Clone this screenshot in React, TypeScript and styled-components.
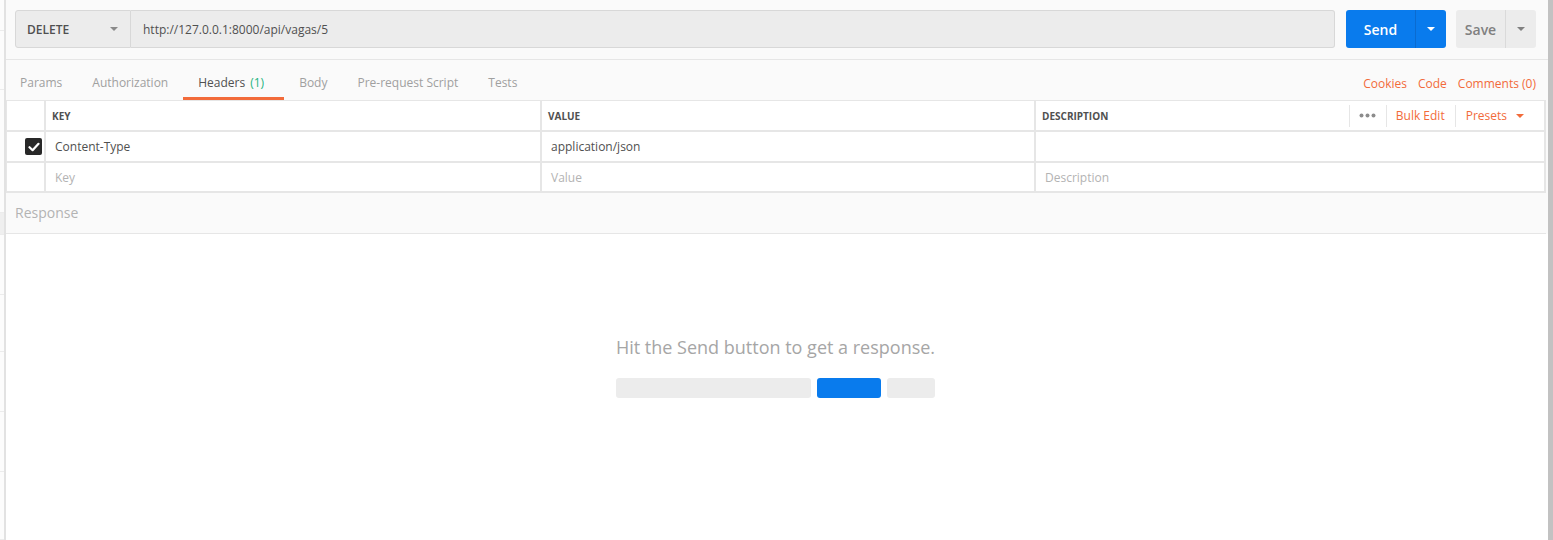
import styled, { createGlobalStyle } from "styled-components"

const Global = createGlobalStyle`
    html, body {
        margin: 0;
        padding: 0;
        background: #ffffff;
        font-family: "Open Sans", "Liberation Sans", sans-serif;
    }
    * {
        box-sizing: border-box;
    }
`

const Colors = {
    Orange: "#f26b3a",
    Blue: "#097bed",
    Text: "#505050",
    Muted: "#808080",
    Placeholder: "#b3b3b3",
    Line: "#e6e6e6",
    Field: "#ececec",
    Panel: "#fafafa",
}

const Caret = ({ color, size = 8 }: { color: string; size?: number }) => (
    <svg width={size} height={size / 2} viewBox="0 0 8 4">
        <path d="M0 0 L8 0 L4 4 Z" fill={color} />
    </svg>
)

const CheckIcon = () => (
    <svg width="12" height="10" viewBox="0 0 12 10">
        <path
            d="M1.5 5.2 L4.6 8.2 L10.5 1.8"
            stroke="#ffffff"
            strokeWidth="2.2"
            fill="none"
            strokeLinecap="round"
            strokeLinejoin="round"
        />
    </svg>
)

const DotsIcon = () => (
    <svg width="17" height="5" viewBox="0 0 17 5">
        <circle cx="2.5" cy="2.5" r="2" fill="#8c8c8c" />
        <circle cx="8.5" cy="2.5" r="2" fill="#8c8c8c" />
        <circle cx="14.5" cy="2.5" r="2" fill="#8c8c8c" />
    </svg>
)

const tabs = [
    { label: "Params" },
    { label: "Authorization" },
    { label: "Headers", count: "(1)", active: true },
    { label: "Body" },
    { label: "Pre-request Script" },
    { label: "Tests" },
]

const sideItems = [31, 59, 123, 22, 60, 57, 60, 60, 68]

function App() {
    return (
        <>
            <Global />
            <Page>
                <Sidebar>
                    {sideItems.map((h, i) => (
                        <SideItem key={i} height={h} selected={i === 3} />
                    ))}
                </Sidebar>
                <Main>
                    <RequestBar>
                        <MethodSelect>
                            <span>DELETE</span>
                            <Caret color="#8a8a8a" />
                        </MethodSelect>
                        <UrlInput>http://127.0.0.1:8000/api/vagas/5</UrlInput>
                        <SplitButton primary>
                            <ButtonLabel>Send</ButtonLabel>
                            <ButtonCaret primary>
                                <Caret color="#ffffff" />
                            </ButtonCaret>
                        </SplitButton>
                        <SplitButton>
                            <ButtonLabel>Save</ButtonLabel>
                            <ButtonCaret>
                                <Caret color="#808080" />
                            </ButtonCaret>
                        </SplitButton>
                    </RequestBar>

                    <TabBar>
                        <Tabs>
                            {tabs.map((t) => (
                                <Tab key={t.label} active={t.active}>
                                    {t.label}
                                    {t.count && <Count>{t.count}</Count>}
                                </Tab>
                            ))}
                        </Tabs>
                        <Links>
                            <LinkText>Cookies</LinkText>
                            <LinkText>Code</LinkText>
                            <LinkText>Comments (0)</LinkText>
                        </Links>
                    </TabBar>

                    <Table>
                        <Cell />
                        <HeadCell>Key</HeadCell>
                        <HeadCell>Value</HeadCell>
                        <HeadCell>
                            Description
                            <Tools>
                                <Tool>
                                    <DotsIcon />
                                </Tool>
                                <Tool>
                                    <LinkText>Bulk Edit</LinkText>
                                </Tool>
                                <Tool last>
                                    <LinkText>Presets</LinkText>
                                    <Caret color={Colors.Orange} />
                                </Tool>
                            </Tools>
                        </HeadCell>

                        <CheckCell>
                            <CheckBox>
                                <CheckIcon />
                            </CheckBox>
                        </CheckCell>
                        <Cell>Content-Type</Cell>
                        <Cell>application/json</Cell>
                        <Cell />

                        <Cell />
                        <Cell faded>Key</Cell>
                        <Cell faded>Value</Cell>
                        <Cell faded>Description</Cell>
                    </Table>

                    <ResponseHeader>Response</ResponseHeader>

                    <ResponseBody>
                        <Empty>
                            <EmptyText>Hit the Send button to get a response.</EmptyText>
                            <Bars>
                                <Bar width={195} />
                                <Bar width={64} blue />
                                <Bar width={48} />
                            </Bars>
                        </Empty>
                    </ResponseBody>
                </Main>
                <Scrollbar />
            </Page>
        </>
    )
}

export default App

const Page = styled.div`
    display: flex;
    width: 1553px;
    height: 540px;
    overflow: hidden;
    background: #ffffff;
`

const Sidebar = styled.div`
    width: 6px;
    flex-shrink: 0;
    display: flex;
    flex-direction: column;
    background: #ffffff;
    border-right: 2px solid #e2e2e2;
`

const SideItem = styled.div<{ height: number; selected?: boolean }>`
    height: ${({ height }) => `${height}px`};
    flex-shrink: 0;
    border-bottom: 1px solid #ececec;
    background: ${({ selected }) => (selected ? "#efefef" : "#fcfcfc")};
`

const Main = styled.div`
    flex: 1;
    min-width: 0;
    display: flex;
    flex-direction: column;
    background: ${Colors.Panel};
`

const Scrollbar = styled.div`
    width: 5px;
    flex-shrink: 0;
    background: #c2c2c2;
`

const RequestBar = styled.div`
    height: 60px;
    display: flex;
    align-items: center;
    padding: 0 12px 1px 9px;
    border-bottom: 1px solid ${Colors.Line};
`

const MethodSelect = styled.div`
    width: 116px;
    height: 38px;
    display: flex;
    align-items: center;
    justify-content: space-between;
    padding: 0 12px 0 11px;
    background: ${Colors.Field};
    border: 1px solid #d8d8d8;
    border-radius: 3px 0 0 3px;
    font-size: 12px;
    font-weight: 600;
    color: ${Colors.Text};
`

const UrlInput = styled.div`
    flex: 1;
    height: 38px;
    display: flex;
    align-items: center;
    padding: 0 12px;
    background: ${Colors.Field};
    border: 1px solid #d8d8d8;
    border-left: none;
    border-radius: 0 3px 3px 0;
    font-size: 12px;
    color: ${Colors.Text};
    margin-right: 11px;
`

const SplitButton = styled.div<{ primary?: boolean }>`
    width: ${({ primary }) => (primary ? "100px" : "80px")};
    height: 38px;
    display: flex;
    border-radius: 3px;
    background: ${({ primary }) => (primary ? Colors.Blue : Colors.Field)};
    color: ${({ primary }) => (primary ? "#ffffff" : Colors.Muted)};
    margin-right: ${({ primary }) => (primary ? "10px" : "0")};
`

const ButtonLabel = styled.div`
    flex: 1;
    display: flex;
    align-items: center;
    justify-content: center;
    font-size: 14px;
    font-weight: 600;
`

const ButtonCaret = styled.div<{ primary?: boolean }>`
    width: 31px;
    display: flex;
    align-items: center;
    justify-content: center;
    border-left: 1px solid ${({ primary }) => (primary ? "#0a6bd0" : "#dadada")};
`

const TabBar = styled.div`
    height: 40px;
    display: flex;
    align-items: stretch;
    justify-content: space-between;
    padding-right: 12px;
`

const Tabs = styled.div`
    display: flex;
    align-items: stretch;
    margin-left: -1px;
`

const Tab = styled.div<{ active?: boolean }>`
    display: flex;
    align-items: center;
    padding: 7px 15px 0;
    font-size: 12px;
    color: ${({ active }) => (active ? Colors.Text : "#a0a0a0")};
    border-bottom: 3px solid ${({ active }) => (active ? Colors.Orange : "transparent")};
`

const Count = styled.span`
    margin-left: 5px;
    padding-right: 5px;
    color: #26b47f;
`

const Links = styled.div`
    display: flex;
    align-items: center;
    gap: 11px;
    padding-top: 6px;
`

const LinkText = styled.span`
    font-size: 12px;
    color: ${Colors.Orange};
    white-space: nowrap;
`

const Table = styled.div`
    display: grid;
    grid-template-columns: 37px 494px 492px 1fr;
    grid-template-rows: 29px 29px 28px;
    gap: 2px;
    padding: 1px 2px 2px 1px;
    margin-right: 2px;
    background: ${Colors.Line};
`

const Cell = styled.div<{ faded?: boolean }>`
    display: flex;
    align-items: center;
    padding: 0 9px;
    background: #ffffff;
    font-size: 12px;
    color: ${({ faded }) => (faded ? Colors.Placeholder : Colors.Text)};
`

const HeadCell = styled.div`
    display: flex;
    align-items: center;
    padding: 0 0 0 6px;
    background: #ffffff;
    font-size: 10px;
    font-weight: 700;
    text-transform: uppercase;
    color: ${Colors.Text};
`

const Tools = styled.div`
    margin-left: auto;
    display: flex;
    align-items: center;
    height: 22px;
    text-transform: none;
    font-weight: 400;
`

const Tool = styled.div<{ last?: boolean }>`
    height: 100%;
    display: flex;
    align-items: center;
    gap: 9px;
    padding: ${({ last }) => (last ? "0 20px 0 10px" : "0 10px 0 9px")};
    border-left: 1px solid ${Colors.Line};
`

const CheckCell = styled.div`
    display: flex;
    align-items: center;
    justify-content: flex-end;
    padding-right: 2px;
    background: #ffffff;
`

const CheckBox = styled.div`
    width: 17px;
    height: 17px;
    border-radius: 2px;
    background: #282828;
    display: flex;
    align-items: center;
    justify-content: center;
`

const ResponseHeader = styled.div`
    height: 41px;
    display: flex;
    align-items: center;
    padding: 0 0 2px 9px;
    font-size: 14px;
    color: ${Colors.Placeholder};
    border-bottom: 1px solid ${Colors.Line};
    margin-right: 2px;
`

const ResponseBody = styled.div`
    flex: 1;
    background: #ffffff;
    display: flex;
    justify-content: center;
    padding-top: 101px;
`

const Empty = styled.div`
    display: flex;
    flex-direction: column;
    align-items: center;
    margin-left: -3px;
`

const EmptyText = styled.div`
    font-size: 18px;
    line-height: 24px;
    color: #a6a6a6;
`

const Bars = styled.div`
    display: flex;
    gap: 6px;
    margin-top: 19px;
`

const Bar = styled.div<{ width: number; blue?: boolean }>`
    width: ${({ width }) => `${width}px`};
    height: 20px;
    border-radius: 3px;
    background: ${({ blue }) => (blue ? Colors.Blue : Colors.Field)};
`
